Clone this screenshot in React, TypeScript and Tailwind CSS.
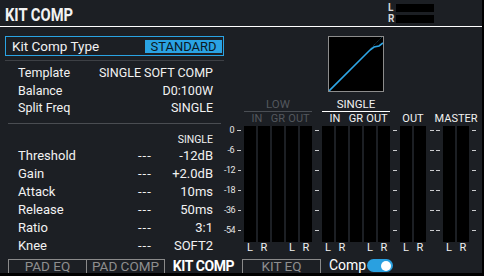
import React from "react";

interface Sub {
  label: string;
  span: number;
}

interface GroupProps {
  title?: string;
  dim?: boolean;
  width: string;
  subs: Sub[];
  lr: string[];
}

const scaleLabels = ["0", "-6", "-12", "-18", "-36", "-54"];
const lowerRows = [
  { label: "Threshold", value: "-12dB" },
  { label: "Gain", value: "+2.0dB" },
  { label: "Attack", value: "10ms" },
  { label: "Release", value: "50ms" },
  { label: "Ratio", value: "3:1" },
  { label: "Knee", value: "SOFT2" },
];

function TickColumn({ width, double }: { width: string; double?: boolean }) {
  return (
    <div className={`${width} flex flex-col pt-[23px]`}>
      {scaleLabels.map((s) => (
        <div key={s} className="h-[20px] flex items-center justify-center gap-[2px]">
          <div className="w-[4px] h-px bg-[#c9cacc]" />
          {double && <div className="w-[4px] h-px bg-[#c9cacc]" />}
        </div>
      ))}
    </div>
  );
}

function Group({ title, dim, width, subs, lr }: GroupProps) {
  const text = dim ? "text-[#53575d]" : "text-[#f1f1f1]";
  return (
    <div className={`${width} flex flex-col`}>
      {/* group title */}
      <div
        className={`h-[15px] flex justify-center text-[11.5px] leading-[14px] ${text} ${
          title ? (dim ? "border-b border-[#4a4e54]" : "border-b border-white") : ""
        }`}
      >
        {title}
      </div>
      {/* IN / GR / OUT */}
      <div className={`h-[14px] flex gap-[2px] text-[11px] leading-[14px] ${text}`}>
        {subs.map((s) => (
          <div
            key={s.label}
            className={`flex justify-center whitespace-nowrap ${s.span === 2 ? "w-[26px]" : "w-[12px]"}`}
          >
            {s.label}
          </div>
        ))}
      </div>
      {/* bars */}
      <div className="h-[116px] flex gap-[2px]">
        {lr.map((_, i) => (
          <div key={i} className="w-[12px] h-full bg-black" />
        ))}
      </div>
      <div className="h-[12px] flex gap-[2px] text-[11px] leading-[12px] text-[#f1f1f1]">
        {lr.map((l, i) => (
          <div key={i} className="w-[12px] flex justify-center">
            {l}
          </div>
        ))}
      </div>
    </div>
  );
}

export default function App() {
  return (
    <div className="w-[484px] h-[276px] bg-black overflow-hidden font-['Roboto',sans-serif]">
      <div className="w-[482px] h-[273px] bg-[#1c1f24] flex flex-col overflow-hidden text-[#f2f2f2]">
        {/* header */}
        <div className="h-[27px] shrink-0 border-b border-white flex items-start">
          <div className="pl-[6px] pt-[6px] text-[18px] leading-[18px] font-bold scale-x-[0.82] origin-left whitespace-nowrap">
            KIT COMP
          </div>
          <div className="ml-auto mr-[48px] mt-[4px] flex flex-col gap-[3px]">
            <div className="flex items-center h-[8px]">
              <span className="w-[8px] text-[10px] leading-[8px] font-bold text-[#d8d8d8]">L</span>
              <div className="w-[38px] h-[8px] bg-black" />
            </div>
            <div className="flex items-center h-[8px]">
              <span className="w-[8px] text-[10px] leading-[8px] font-bold text-[#d8d8d8]">R</span>
              <div className="w-[38px] h-[8px] bg-black" />
            </div>
          </div>
        </div>

        {/* body */}
        <div className="h-[231px] shrink-0 flex">
          {/* left column */}
          <div className="w-[224px] shrink-0 pl-[5px] flex flex-col">
            <div className="mt-[9px] h-[20px] w-[219px] border border-[#2aa3e3] flex items-center">
              <span className="pl-[6px] text-[13.5px] leading-[14px]">Kit Comp Type</span>
              <span className="ml-auto mr-px h-[13px] w-[77px] bg-[#2aa3e3] text-[#0d1822] text-[13px] leading-[13px] flex items-center justify-center">
                STANDARD
              </span>
            </div>
            <div className="mt-[4px] h-px w-[219px] bg-[#3d4045]" />
            <div className="mt-[4px] flex flex-col text-[12.5px]">
              {[
                ["Template", "SINGLE SOFT COMP"],
                ["Balance", "D0:100W"],
                ["Split Freq", "SINGLE"],
              ].map(([l, v]) => (
                <div key={l} className="h-[17.5px] flex items-center pl-[13px] pr-[11px]">
                  <span>{l}</span>
                  <span className="ml-auto">{v}</span>
                </div>
              ))}
            </div>
            <div className="mt-[5px] ml-[3px] h-px w-[213px] bg-[#4a4d52]" />
            <div className="h-[23px] flex items-end justify-end pr-[11px] pb-[2px] text-[10.5px] leading-[10px]">
              SINGLE
            </div>
            <div className="flex flex-col text-[13px]">
              {lowerRows.map((r) => (
                <div key={r.label} className="h-[18px] flex items-center pl-[13px] pr-[11px]">
                  <span className="w-[120px]">{r.label}</span>
                  <span className="tracking-[1px]">---</span>
                  <span className="ml-auto">{r.value}</span>
                </div>
              ))}
            </div>
          </div>

          {/* right column */}
          <div className="flex-1 flex flex-col">
            <div className="mt-[9px] ml-[104px] w-[56px] h-[56px] border border-[#8c8c8c] bg-black">
              <svg width="54" height="54" viewBox="0 0 54 54">
                <polyline
                  points="41,12 53,0"
                  fill="none"
                  stroke="#1f4a5c"
                  strokeWidth="1"
                  strokeDasharray="1 1"
                />
                <polyline
                  points="0,54 41,13 45,10 50,9 54,6"
                  fill="none"
                  stroke="#2ea6e6"
                  strokeWidth="1.6"
                />
              </svg>
            </div>
            <div className="mt-[5px] flex items-start">
              {/* scale */}
              <div className="w-[20px] flex flex-col pt-[23px]">
                {scaleLabels.map((s) => (
                  <div key={s} className="h-[20px] flex items-center justify-end">
                    <span className="text-[9px] leading-[9px] tracking-[-0.5px] whitespace-nowrap text-[#e6e6e6]">
                      {s}
                    </span>
                    <div className="ml-[3px] mr-[3px] w-[4px] h-px bg-[#c9cacc]" />
                  </div>
                ))}
              </div>
              <Group
                title="LOW"
                dim
                width="w-[68px]"
                subs={[
                  { label: "IN", span: 2 },
                  { label: "GR", span: 1 },
                  { label: "OUT", span: 2 },
                ]}
                lr={["L", "R", "", "L", "R"]}
              />
              <TickColumn width="w-[10px]" />
              <Group
                title="SINGLE"
                width="w-[68px]"
                subs={[
                  { label: "IN", span: 2 },
                  { label: "GR", span: 1 },
                  { label: "OUT", span: 2 },
                ]}
                lr={["L", "R", "", "L", "R"]}
              />
              <TickColumn width="w-[10px]" />
              <Group width="w-[26px]" subs={[{ label: "OUT", span: 2 }]} lr={["L", "R"]} />
              <TickColumn width="w-[17px]" double />
              <Group width="w-[26px]" subs={[{ label: "MASTER", span: 2 }]} lr={["L", "R"]} />
              <TickColumn width="w-[10px]" />
            </div>
          </div>
        </div>

        {/* bottom tabs */}
        <div className="h-[15px] shrink-0 flex items-end pl-[8px] text-[13.5px] leading-[11px]">
          <div className="w-[78px] h-[14px] border-t border-l border-[#8a8a8a] text-[#8e8e8e] flex justify-center pt-px whitespace-nowrap">
            PAD EQ
          </div>
          <div className="w-[79px] h-[14px] border-t border-x border-[#8a8a8a] text-[#8e8e8e] flex justify-center pt-px whitespace-nowrap">
            PAD COMP
          </div>
          <div className="w-[77px] h-[14px] flex justify-center pt-[2px] font-bold text-[14px] text-white tracking-[-0.4px] whitespace-nowrap">
            KIT COMP
          </div>
          <div className="w-[79px] h-[14px] border-t border-x border-[#8a8a8a] text-[#8e8e8e] flex justify-center pt-px whitespace-nowrap">
            KIT EQ
          </div>
          <div className="ml-[8px] h-[14px] pt-[1px] text-[14px] text-white">Comp</div>
          <div className="ml-px mb-px w-[26px] h-[13px] rounded-full bg-[#2aa0e0] flex items-center justify-end pr-[2px]">
            <div className="w-[10px] h-[10px] rounded-full bg-white" />
          </div>
        </div>
      </div>
    </div>
  );
}
